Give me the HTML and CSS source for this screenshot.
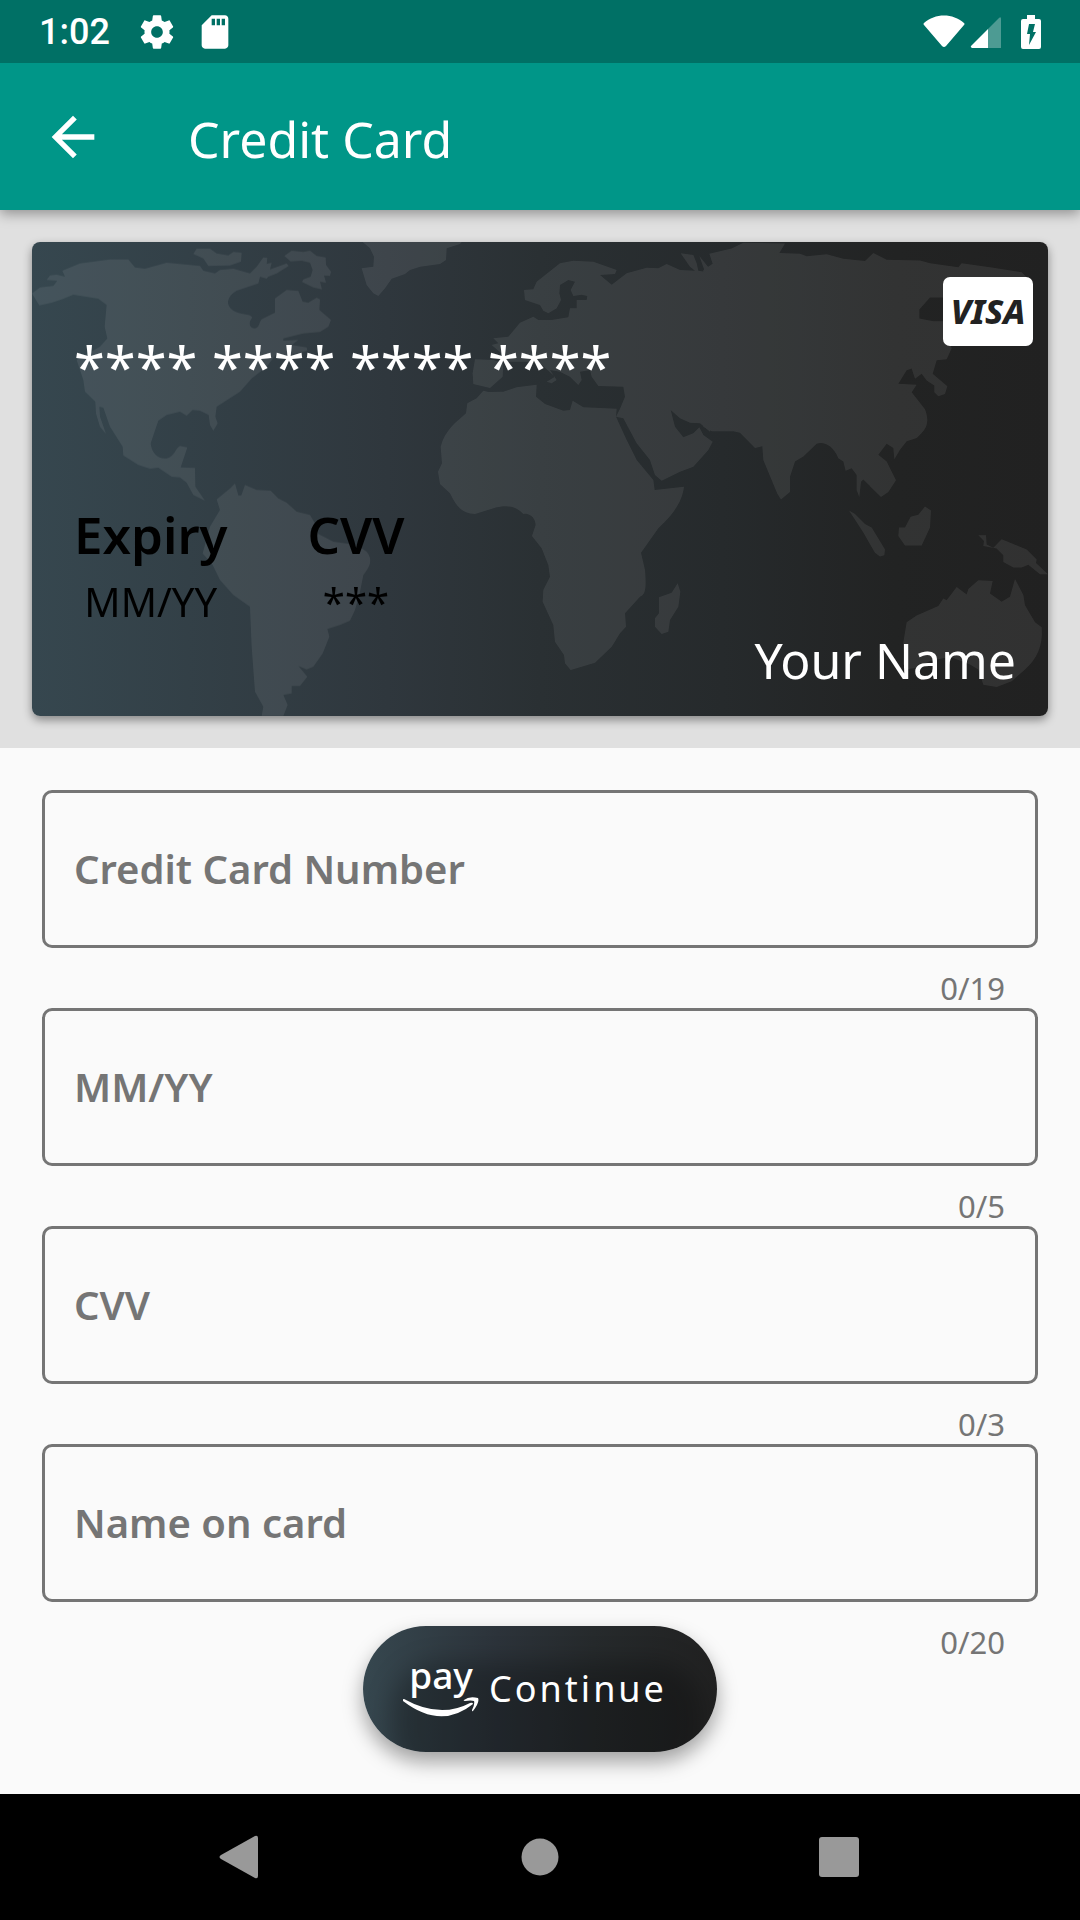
FILE: index.html
```html
<!DOCTYPE html>
<html lang="en">
<head>
<meta charset="utf-8">
<meta name="viewport" content="width=device-width, initial-scale=1">
<title>Credit Card</title>
<link rel="stylesheet" href="styles.css">
</head>
<body>
<div class="status-bar">
  <div class="status-group">
    <span class="clock">1:02</span>
    <svg class="gear" width="40" height="40" viewBox="0 0 24 24" fill="currentColor"><path d="M19.43 12.98c.04-.32.07-.64.07-.98s-.03-.66-.07-.98l2.11-1.65c.19-.15.24-.42.12-.64l-2-3.46c-.12-.22-.39-.3-.61-.22l-2.49 1c-.52-.4-1.08-.73-1.69-.98l-.38-2.65C14.46 2.18 14.25 2 14 2h-4c-.25 0-.46.18-.49.42l-.38 2.65c-.61.25-1.17.59-1.69.98l-2.49-1c-.23-.09-.49 0-.61.22l-2 3.46c-.13.22-.07.49.12.64l2.11 1.65c-.04.32-.07.65-.07.98s.03.66.07.98l-2.11 1.65c-.19.15-.24.42-.12.64l2 3.46c.12.22.39.3.61.22l2.49-1c.52.4 1.08.73 1.69.98l.38 2.65c.03.24.24.42.49.42h4c.25 0 .46-.18.49-.42l.38-2.65c.61-.25 1.17-.59 1.69-.98l2.49 1c.23.09.49 0 .61-.22l2-3.46c.12-.22.07-.49-.12-.64l-2.11-1.65zM12 15.5c-1.93 0-3.5-1.57-3.5-3.5s1.57-3.5 3.5-3.5 3.500 1.57 3.500 3.500-1.57 3.500-3.500 3.500z"/></svg>
    <svg width="40" height="40" viewBox="0 0 24 24" fill="currentColor"><path d="M18 2h-8L4.020 8 4 20c0 1.100.9 2 2 2h12c1.100 0 2-.9 2-2V4c0-1.100-.9-2-2-2zm-6 6h-2V4h2v4zm3 0h-2V4h2v4zm3 0h-2V4h2v4z"/></svg>
  </div>
  <div class="status-icons">
    <svg width="42" height="34" viewBox="0 0 42 34" fill="currentColor"><path d="M1 8C12-2 30-2 41 8Q42 9 41 10L23 31Q21 33 19 31L1 10Q0 9 1 8Z"/></svg>
    <svg width="32" height="34" viewBox="0 0 32 34" fill="currentColor"><path d="M18 14 29 3Q31 1 31 4V33H18Z" opacity=".3"/><path d="M18 14V33H2Q0 32 1 31Z"/></svg>
    <svg class="battery" width="20" height="34" viewBox="0 0 20 34" fill="currentColor"><path fill-rule="evenodd" d="M6 0h8v4h4q2 0 2 2v26q0 2-2 2H2q-2 0-2-2V6q0-2 2-2h4ZM8 9h6l-2 8h3L8 30l1-11H6Z"/></svg>
  </div>
</div>

<header class="app-bar">
  <button class="back" type="button" aria-label="Back">
    <svg width="64" height="64" viewBox="0 0 24 24" fill="currentColor"><path d="M20 11H7.830l5.590-5.590L12 4l-8 8 8 8 1.410-1.410L7.830 13H20v-2z"/></svg>
  </button>
  <h1>Credit Card</h1>
</header>

<main>
  <section class="preview">
    <div class="card">
      <svg class="world" viewBox="0 0 1016 474" preserveAspectRatio="xMidYMid slice" aria-hidden="true">
        <g fill="#fff" opacity=".075">
          <g transform="translate(-12 -12) scale(.33333)">
            <path d="M36 190L60 172 100 168 112 152 80 150 90 136 110 134 135 140 127 122 180 100 270 88 325 88 345 112 375 116 440 98 540 108 550 122 585 130 600 120 640 116 690 130 710 110 730 82 742 84 740 102 755 98 750 118 800 100 806 108 770 130 745 140 740 146 720 140 715 160 650 182C620 200 615 225 640 242 660 255 690 250 697 262 682 280 690 295 705 295 722 292 715 270 730 265L765 248 765 205 800 180 835 183 848 215 865 218 890 203 900 208 898 240 933 270 925 290 900 306 850 310 790 325 790 332 835 330 815 345 860 352 862 362 800 378 770 370 740 410 695 445 660 485 590 530 586 560 593 580 580 602 570 585 566 555 540 542 518 540 500 557 480 545 440 555 415 572 402 610 392 640C395 670 415 688 440 685 465 680 465 655 480 648L502 652 482 712 525 714 526 770 555 812 520 795 500 758 480 742 455 740 415 713 390 716 355 705 310 676 308 650 270 590 250 533 238 530 240 560 258 612 240 590 228 550 226 515 195 485 190 450 170 390 240 350 262 325 254 290 260 225 235 206 160 194 125 208 95 218 58 226Z"/>
            <path d="M520 72L530 56 570 56 590 70 625 76 640 66 665 68 663 95 630 106 565 108 550 85Z"/>
            <path d="M793 78L815 62 850 66 870 62 890 78 917 82 918 105 933 125 930 138 912 136 918 158 900 155 906 178 880 172 846 156 850 148 872 140 878 120 870 98 845 92 812 94Z"/>
            <path d="M590 808L632 774 645 760 655 796 664 796 675 765 710 780 752 782 775 805 800 818 830 845 870 855 885 880 895 912 940 935 1010 945 1040 965C1060 990 1050 1010 1030 1035L1020 1085 1005 1140 990 1172 960 1185 922 1197 928 1220 908 1270 880 1310 860 1318 835 1308 862 1340 840 1368 815 1368 815 1390 790 1395 803 1425 790 1458 725 1458 730 1430 705 1385 695 1250 690 1130 640 1095 600 1050 578 1005 548 970 570 890 600 840Z"/>
          </g>
          <g transform="translate(328 -12) scale(.33333)">
            <path d="M8 36L305 36 300 42 260 55 258 90 240 102 180 110 150 120 135 132 95 146 75 175 55 198 40 190 20 165 5 115 40 110 42 80 30 55Z"/>
            <path d="M370 482L385 486 430 485 470 472 530 464 528 500 555 522 610 542 630 540 638 512 670 532 770 536 768 560 800 630 830 690 880 750 884 780 972 770C965 830 920 870 895 895L843 968 855 1020C860 1080 855 1095 840 1100L795 1150 798 1190 780 1210 755 1250 705 1298 660 1312 632 1320 615 1300 612 1275 585 1235 580 1185 548 1115 550 1080 570 1040 565 1005 545 955 516 918 527 885C525 855 500 850 490 852 475 835 450 822 410 832L345 852C300 850 285 820 270 790L240 762 234 725 246 700 242 650C255 600 290 575 318 550L322 520 350 505Z"/>
            <path d="M953 1060L961 1085 955 1130 930 1170 925 1205 905 1212 885 1190 885 1165 897 1150 897 1102 935 1088Z"/>
            <path d="M345 388L400 390 430 400 428 440 390 474 340 462 338 430Z"/>
            <path d="M395 345L415 340 400 325 445 320 480 278 520 260 535 270 575 270 625 262 630 235 650 235 650 210 680 210 682 198 665 194 640 198 632 180 645 155 625 150 600 165 598 190 603 210 590 235 565 250 550 242 540 225 495 210 492 180 520 178 530 155 600 100 640 92 700 95 770 120 765 132 720 135 755 164 800 130 860 113 895 115 920 102 960 120 1005 122 990 110 962 70 1000 75 1010 100 1015 122 1035 125 1018 78 1050 118 1050 605 1020 580 990 578 960 565 932 540 945 590 970 622 1000 610 1018 592 1030 615 1058 635 1045 660 1000 710 960 725 905 752 885 735 870 690 830 640 790 565 768 560 780 536 795 500 790 470 715 468 695 440 690 420 660 425 665 450 655 465 630 440 600 425 570 420 590 450 575 460 560 455 585 440 540 400 500 395 440 395 430 375Z"/>
          </g>
          <g transform="translate(668 -12) scale(.33333 .33806)">
            <path d="M10 118L38 100 28 70 95 55 130 38 255 40 238 68 300 70 320 78 380 72 430 85 495 92 520 68 560 88 660 90 690 98 775 110 785 98 880 112 965 125 985 145 900 145 800 200 690 200 658 235 658 262 700 270 730 270 755 350 740 382 710 385 698 425 742 462 735 485 715 492 703 480 703 460 680 445 665 425 645 440 635 410 620 415 595 455 650 458 635 480 675 530C690 570 680 590 650 615L620 625 600 650 583 678 580 645 560 632 535 665 560 685 588 740 565 775 543 790 490 738 483 745 478 790 470 770 470 725 455 705 437 712 430 685 415 675C400 640 375 625 350 632L310 670 285 685 270 730 270 775 243 797 232 780 190 680 187 640 165 645 120 600 100 595 35 595 10 582Z"/>
            <path d="M447 830L465 840 495 870 515 880 555 945 553 962 540 966 525 955 490 895Z"/>
            <path d="M675 818L693 830 690 880 665 933 615 933 595 905 597 880 615 880 632 848 655 842Z"/>
            <path d="M835 903L858 903 860 930 880 940 905 915 980 945 1010 975 1008 985 1044 1018 1020 1018 985 990 965 998 940 998 910 982 910 962 890 942 850 935 852 920Z"/>
            <path d="M620 1160L650 1140 715 1112 730 1090 740 1095 770 1056 800 1078 805 1062 835 1036 878 1038 870 1075 905 1100 930 1085 945 1032 970 1080 975 1110 1005 1160 1025 1175C1030 1230 1010 1270 975 1300L935 1335 890 1352 850 1345 835 1300 810 1285 750 1262 690 1275 650 1295 615 1300 610 1220Z"/>
          </g>
        </g>
      </svg>
      <span class="visa">VISA</span>
      <p class="card-number">**** **** **** ****</p>
      <dl class="card-details">
        <div><dt>Expiry</dt><dd>MM/YY</dd></div>
        <div><dt>CVV</dt><dd>***</dd></div>
      </dl>
      <p class="card-name">Your Name</p>
    </div>
  </section>

  <form class="form">
    <div class="field">
      <input id="number" type="text" inputmode="numeric" maxlength="19">
      <label for="number">Credit Card Number</label>
      <span class="counter">0/19</span>
    </div>
    <div class="field">
      <input id="expiry" type="text" maxlength="5">
      <label for="expiry">MM/YY</label>
      <span class="counter">0/5</span>
    </div>
    <div class="field">
      <input id="cvv" type="text" inputmode="numeric" maxlength="3">
      <label for="cvv">CVV</label>
      <span class="counter">0/3</span>
    </div>
    <div class="field">
      <input id="name" type="text" maxlength="20">
      <label for="name">Name on card</label>
      <span class="counter">0/20</span>
    </div>
    <button class="continue" type="button">
      <span class="pay">
        <span class="pay-word">pay</span>
        <svg width="76" height="20" viewBox="0 0 76 20" fill="#fff"><path d="M1 2Q37 22 67 6Q70 5 70 7Q38 33 0 4Q-1 2 1 2Z"/><path d="M61 3Q66-1 75 1Q77 5 70 14Q69 15 69 13Q72 7 71 4Q68 3 62 4Q60 4 61 3Z"/></svg>
      </span>
      <span class="continue-label">Continue</span>
    </button>
  </form>
</main>

<nav class="nav-bar" aria-label="System">
  <button type="button" aria-label="Back"><svg width="44" height="44" viewBox="0 0 44 44" fill="#999"><path d="M3 20 37 1Q40 0 40 3V41Q40 44 37 43L3 24Q0 22 3 20Z"/></svg></button>
  <button type="button" aria-label="Home"><svg width="44" height="44" viewBox="0 0 44 44" fill="#999"><circle cx="22" cy="22" r="18.500"/></svg></button>
  <button type="button" aria-label="Overview"><svg width="44" height="44" viewBox="0 0 44 44" fill="#999"><rect x="1" y="2" width="40" height="40" rx="3"/></svg></button>
</nav>
</body>
</html>
```
FILE: styles.css
```css
* {
  box-sizing: border-box;
}

body {
  margin: 0;
  min-height: 100vh;
  display: flex;
  flex-direction: column;
  background: #fafafa;
  font-family: "Noto Sans", "Open Sans", sans-serif;
}

h1,
p,
dl,
dd {
  margin: 0;
  font-weight: 400;
}

svg {
  display: block;
  flex: none;
}

button {
  border: 0;
  padding: 0;
  background: none;
  color: inherit;
  font: inherit;
  cursor: pointer;
}

.status-bar {
  position: relative;
  z-index: 1;
  display: flex;
  justify-content: space-between;
  align-items: center;
  height: 63px;
  padding: 0 39px;
  background: #007065;
  color: #fff;
}

.status-group,
.status-icons {
  display: flex;
  align-items: center;
}

.status-group {
  gap: 18px;
}

.status-icons {
  gap: 5px;
}

.gear {
  margin-left: 9px;
}

.battery {
  margin-left: 14px;
}

.clock {
  font: 500 36px/40px Roboto, sans-serif;
}

.app-bar {
  position: relative;
  display: flex;
  align-items: center;
  gap: 83px;
  height: 147px;
  padding-left: 41px;
  background: #009688;
  color: #fff;
  box-shadow: 0 4px 12px rgba(0, 0, 0, 0.35);
}

.app-bar h1 {
  padding-top: 4px;
  font-size: 50px;
  line-height: 68px;
}

main {
  flex: 1;
}

.preview {
  padding: 32px;
  background: #e0e0e0;
}

.card {
  position: relative;
  display: flex;
  flex-direction: column;
  min-height: 474px;
  padding: 86px 32px 28px 42px;
  overflow: hidden;
  border-radius: 8px;
  background: linear-gradient(90deg, #36474f, #2f373d 35%, #2a3033 50%, #262a2c 68%, #222323 85%, #212121);
  box-shadow: 0 4px 10px rgba(0, 0, 0, 0.4);
}

.world {
  position: absolute;
  inset: 0;
  width: 100%;
  height: 100%;
}

.visa {
  position: absolute;
  top: 35px;
  right: 15px;
  width: 90px;
  border-radius: 7px;
  background: #fff;
  color: #222;
  font-size: 34px;
  font-style: italic;
  font-weight: 800;
  line-height: 69px;
  text-align: center;
}

.card-number,
.card-details,
.card-name {
  position: relative;
}

.card-number {
  color: #fff;
  font-size: 56px;
  line-height: 76px;
}

.card-details {
  display: flex;
  gap: 80px;
  margin-top: 92px;
  color: #000;
  text-align: center;
}

.card-details dt {
  font-size: 51px;
  font-weight: 600;
  line-height: 76px;
}

.card-details dd {
  font-size: 40px;
  line-height: 60px;
}

.card-name {
  margin-top: auto;
  color: #fff;
  font-size: 50px;
  line-height: 56px;
  text-align: right;
}

.form {
  display: flex;
  flex-direction: column;
  padding: 42px;
}

.field {
  display: grid;
  grid-template-rows: 158px 60px;
}

.field input,
.field label {
  grid-area: 1 / 1;
}

.field input {
  width: 100%;
  padding: 0 30px;
  border: 3px solid #757575;
  border-radius: 10px;
  background: transparent;
  color: #212121;
  font: inherit;
  font-size: 40px;
}

.field label {
  align-self: center;
  padding-left: 32px;
  color: #757575;
  font-size: 40px;
  font-weight: 600;
  line-height: 56px;
  pointer-events: none;
}

.counter {
  padding: 18px 33px 0;
  color: #757575;
  font-size: 31px;
  line-height: 44px;
  text-align: right;
}

.continue {
  position: relative;
  display: flex;
  align-self: center;
  align-items: center;
  gap: 10px;
  height: 126px;
  margin-top: -36px;
  padding: 0 50px 0 40px;
  overflow: hidden;
  border-radius: 63px;
  background: linear-gradient(90deg, #36474f, #2c333a 38%, #262a2c 65%, #212121);
  box-shadow: 0 10px 20px rgba(0, 0, 0, 0.36);
  color: #fff;
}

.continue::before {
  content: "";
  position: absolute;
  inset: 36px 14px -30px 28px;
  border-radius: 50px;
  background: rgba(0, 0, 0, 0.26);
  filter: blur(12px);
}

.pay,
.continue-label {
  position: relative;
}

.pay {
  display: flex;
  flex-direction: column;
  align-items: center;
  padding-bottom: 8px;
}

.pay-word {
  font-size: 37px;
  font-weight: 500;
  line-height: 44px;
}

.continue-label {
  font-size: 36px;
  letter-spacing: 3px;
  line-height: 48px;
}

.nav-bar {
  display: grid;
  grid-template-columns: repeat(3, 1fr);
  height: 126px;
  padding: 0 90px;
  background: #000;
}

.nav-bar button {
  display: grid;
  place-items: center;
}
```
